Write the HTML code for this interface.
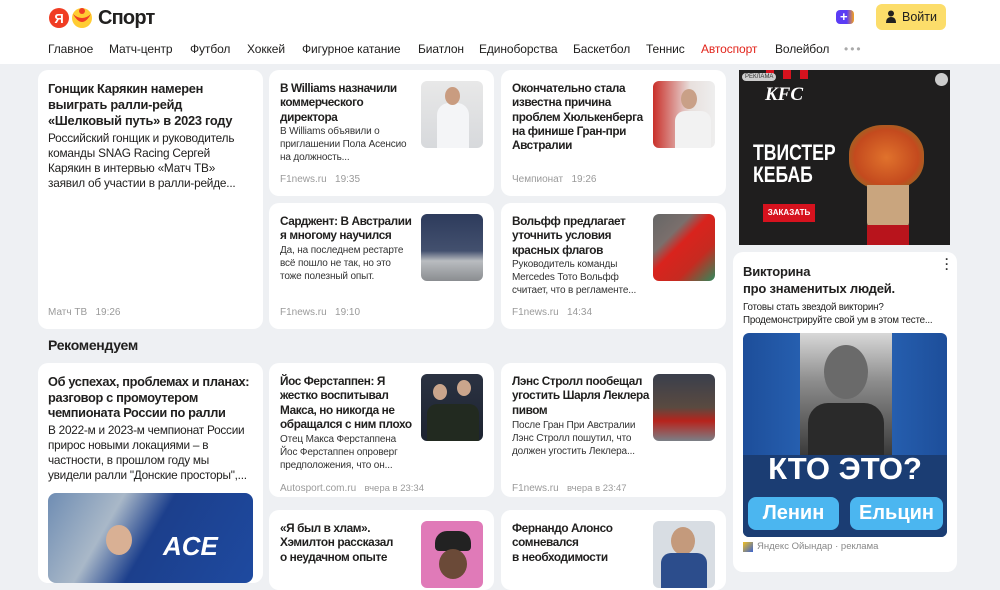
<!DOCTYPE html>
<html><head><meta charset="utf-8"><style>
*{margin:0;padding:0;box-sizing:border-box}
body{width:1000px;height:563px;overflow:hidden;background:#eef0f3;font-family:"Liberation Sans",sans-serif;color:#21201f;position:relative}
.hdr{position:absolute;left:0;top:0;width:1000px;height:64px;background:#fff}
.logo{position:absolute;left:48px;top:6px;display:flex;align-items:center}
.nav{position:absolute;top:42px;left:48px;font-size:12px;white-space:nowrap;letter-spacing:-0.1px}
.nav span{position:absolute;top:0}
.card{position:absolute;background:#fff;border-radius:10px;overflow:hidden}
.t{position:absolute;font-weight:bold;font-size:11.8px;line-height:14.3px;letter-spacing:-0.4px;white-space:nowrap}
.d{position:absolute;font-size:10px;line-height:12.8px;color:#333;letter-spacing:-0.15px;white-space:nowrap}
.m{position:absolute;font-size:10px;color:#9a9a9a;white-space:nowrap}
.th{position:absolute;width:62px;height:67px;border-radius:6px;overflow:hidden}
</style></head><body>
<div class="hdr">
 <div class="logo">
  <svg width="48" height="24" viewBox="0 0 48 24"><circle cx="11" cy="12" r="10" fill="#f03d24"/><text x="11" y="17" font-size="13" font-weight="bold" fill="#fff" text-anchor="middle" font-family="Liberation Sans">Я</text><circle cx="34" cy="12" r="10" fill="#fc3"/><path d="M25 8 Q34 24 43 8 Q34 16 25 8Z" fill="#f03d24"/><circle cx="34" cy="5" r="3" fill="#f03d24"/></svg>
  <span style="font-size:20px;font-weight:bold;margin-left:2px;letter-spacing:-0.8px">Спорт</span>
 </div>
 <div style="position:absolute;left:836px;top:10px;width:18px;height:14px;border-radius:4px;background:linear-gradient(90deg,#5b3cf5 60%,#f7a21b)"></div>
 <div style="position:absolute;left:840px;top:10px;color:#fff;font-weight:bold;font-size:13px;line-height:14px">+</div>
 <div style="position:absolute;left:876px;top:4px;width:70px;height:26px;border-radius:6px;background:#fcdd6a;font-size:12.5px;line-height:26px;padding-left:26px">Войти</div>
 <svg style="position:absolute;left:886px;top:10px" width="10" height="13" viewBox="0 0 10 13"><circle cx="5" cy="3.5" r="3" fill="#21201f"/><path d="M0 13 Q0 7 5 7 Q10 7 10 13Z" fill="#21201f"/></svg>
 <div class="nav">
  <span style="left:0">Главное</span><span style="left:61px">Матч-центр</span><span style="left:142px">Футбол</span><span style="left:199px">Хоккей</span><span style="left:254px">Фигурное катание</span><span style="left:370px">Биатлон</span><span style="left:431px">Единоборства</span><span style="left:525px">Баскетбол</span><span style="left:598px">Теннис</span><span style="left:653px;color:#e2231a">Автоспорт</span><span style="left:727px">Волейбол</span><span style="left:796px;color:#aaa;letter-spacing:2px">•••</span>
 </div>
</div>

<div class="card" style="left:38px;top:70px;width:225px;height:259px">
 <div class="t" style="left:10px;top:11px;font-size:12.8px;line-height:16px;letter-spacing:-0.25px">Гонщик Карякин намерен<br>выиграть ралли-рейд<br>«Шелковый путь» в 2023 году</div>
 <div class="d" style="left:10px;top:61px;font-size:11.8px;line-height:15px;color:#21201f;letter-spacing:-0.2px">Российский гонщик и руководитель<br>команды SNAG Racing Сергей<br>Карякин в интервью «Матч ТВ»<br>заявил об участии в ралли-рейде...</div>
 <div class="m" style="left:10px;top:237px">Матч ТВ &nbsp;&nbsp;19:26</div>
</div>

<div class="card" style="left:269px;top:70px;width:225px;height:126px">
 <div class="t" style="left:11px;top:11px">В Williams назначили<br>коммерческого<br>директора</div>
 <div class="d" style="left:11px;top:56px">В Williams объявили о<br>приглашении Пола Асенсио<br>на должность...</div>
 <div class="th" style="left:152px;top:11px;background:linear-gradient(#e8e8e8,#d7d9dc)"><div style="position:absolute;left:16px;top:22px;width:32px;height:45px;background:#f4f5f7;border-radius:12px 12px 0 0"></div><div style="position:absolute;left:24px;top:6px;width:15px;height:18px;background:#c99c80;border-radius:50%"></div></div>
 <div class="m" style="left:11px;top:104px">F1news.ru &nbsp;&nbsp;19:35</div>
</div>
<div class="card" style="left:501px;top:70px;width:225px;height:126px">
 <div class="t" style="left:11px;top:11px">Окончательно стала<br>известна причина<br>проблем Хюлькенберга<br>на финише Гран-при<br>Австралии</div>
 <div class="th" style="left:152px;top:11px;background:linear-gradient(90deg,#c9302a,#e8e0dd 60%,#eee)"><div style="position:absolute;left:22px;top:30px;width:36px;height:37px;background:#f2f2f2;border-radius:10px 10px 0 0"></div><div style="position:absolute;left:28px;top:8px;width:16px;height:20px;background:#c9a087;border-radius:50%"></div></div>
 <div class="m" style="left:11px;top:104px">Чемпионат &nbsp;&nbsp;19:26</div>
</div>
<div class="card" style="left:269px;top:203px;width:225px;height:126px">
 <div class="t" style="left:11px;top:11px">Сарджент: В Австралии<br>я многому научился</div>
 <div class="d" style="left:11px;top:42px">Да, на последнем рестарте<br>всё пошло не так, но это<br>тоже полезный опыт.</div>
 <div class="th" style="left:152px;top:11px;background:linear-gradient(#2d3b5c 0,#43506e 55%,#b9bcc0 70%,#8a8d90)"></div>
 <div class="m" style="left:11px;top:104px">F1news.ru &nbsp;&nbsp;19:10</div>
</div>
<div class="card" style="left:501px;top:203px;width:225px;height:126px">
 <div class="t" style="left:11px;top:11px">Вольфф предлагает<br>уточнить условия<br>красных флагов</div>
 <div class="d" style="left:11px;top:56px">Руководитель команды<br>Mercedes Тото Вольфф<br>считает, что в регламенте...</div>
 <div class="th" style="left:152px;top:11px;background:linear-gradient(135deg,#666 0,#7a6f6c 30%,#d9231d 45%,#c62a20 70%,#2f8a5c)"></div>
 <div class="m" style="left:11px;top:104px">F1news.ru &nbsp;&nbsp;14:34</div>
</div>

<div style="position:absolute;left:48px;top:337px;font-size:14px;font-weight:bold;letter-spacing:-0.3px">Рекомендуем</div>

<div class="card" style="left:38px;top:363px;width:225px;height:220px">
 <div class="t" style="left:10px;top:11px;font-size:12.8px;line-height:15.5px;letter-spacing:-0.35px">Об успехах, проблемах и планах:<br>разговор с промоутером<br>чемпионата России по ралли</div>
 <div class="d" style="left:10px;top:60px;font-size:11.8px;line-height:15px;color:#21201f;letter-spacing:-0.25px">В 2022-м и 2023-м чемпионат России<br>прирос новыми локациями – в<br>частности, в прошлом году мы<br>увидели ралли "Донские просторы",...</div>
 <div style="position:absolute;left:10px;top:130px;width:205px;height:90px;border-radius:8px;background:linear-gradient(120deg,#6f8db3 0,#a9b8c8 30%,#1c3f8c 50%,#1e4aa0 100%)"><div style="position:absolute;left:58px;top:32px;width:26px;height:30px;background:#d9b094;border-radius:50%"></div><div style="position:absolute;left:115px;top:38px;color:#fff;font-size:26px;font-weight:bold;font-style:italic">ACE</div></div>
</div>
<div class="card" style="left:269px;top:363px;width:225px;height:134px">
 <div class="t" style="left:11px;top:11px">Йос Ферстаппен: Я<br>жестко воспитывал<br>Макса, но никогда не<br>обращался с ним плохо</div>
 <div class="d" style="left:11px;top:71px">Отец Макса Ферстаппена<br>Йос Ферстаппен опроверг<br>предположения, что он...</div>
 <div class="th" style="left:152px;top:11px;background:linear-gradient(#2b3242,#1c2330)"><div style="position:absolute;left:6px;top:30px;width:52px;height:37px;background:#222a20;border-radius:10px 10px 0 0"></div><div style="position:absolute;left:12px;top:10px;width:14px;height:16px;background:#caa58c;border-radius:50%"></div><div style="position:absolute;left:36px;top:6px;width:14px;height:16px;background:#caa58c;border-radius:50%"></div></div>
 <div class="m" style="left:11px;top:120px">Autosport.com.ru &nbsp;&nbsp;<span style="font-size:9.5px">вчера в 23:34</span></div>
</div>
<div class="card" style="left:501px;top:363px;width:225px;height:134px">
 <div class="t" style="left:11px;top:11px">Лэнс Стролл пообещал<br>угостить Шарля Леклера<br>пивом</div>
 <div class="d" style="left:11px;top:57px">После Гран При Австралии<br>Лэнс Стролл пошутил, что<br>должен угостить Леклера...</div>
 <div class="th" style="left:152px;top:11px;background:linear-gradient(#3a3f4c 0,#5a4a40 50%,#b7231c 70%,#7a8087)"></div>
 <div class="m" style="left:11px;top:120px">F1news.ru &nbsp;&nbsp;<span style="font-size:9.5px">вчера в 23:47</span></div>
</div>
<div class="card" style="left:269px;top:510px;width:225px;height:80px">
 <div class="t" style="left:11px;top:11px">«Я был в хлам».<br>Хэмилтон рассказал<br>о неудачном опыте</div>
 <div class="th" style="left:152px;top:11px;background:#e07ab8"><div style="position:absolute;left:14px;top:10px;width:36px;height:20px;background:#222;border-radius:12px 12px 4px 4px"></div><div style="position:absolute;left:18px;top:28px;width:28px;height:30px;background:#6b4a38;border-radius:50%"></div></div>
</div>
<div class="card" style="left:501px;top:510px;width:225px;height:80px">
 <div class="t" style="left:11px;top:11px">Фернандо Алонсо<br>сомневался<br>в необходимости</div>
 <div class="th" style="left:152px;top:11px;background:#d8dde3"><div style="position:absolute;left:18px;top:6px;width:24px;height:28px;background:#c49a7c;border-radius:50%"></div><div style="position:absolute;left:8px;top:32px;width:46px;height:35px;background:#2c4d8c;border-radius:10px 10px 0 0"></div></div>
</div>

<div style="position:absolute;left:739px;top:70px;width:211px;height:175px;background:#1f1e1e;overflow:hidden">
 <div style="position:absolute;left:27px;top:0;width:8px;height:9px;background:#d6121e"></div><div style="position:absolute;left:44px;top:0;width:8px;height:9px;background:#d6121e"></div><div style="position:absolute;left:61px;top:0;width:8px;height:9px;background:#d6121e"></div>
 <div style="position:absolute;left:3px;top:3px;background:#ccc;border-radius:5px;font-size:6px;padding:1px 3px;color:#333">РЕКЛАМА</div>
 <div style="position:absolute;left:26px;top:14px;color:#fff;font-weight:bold;font-style:italic;font-size:19px;font-family:'Liberation Serif',serif">KFC</div>
 <div style="position:absolute;left:14px;top:72px;color:#fff;font-weight:bold;font-size:22px;line-height:22px;transform:scaleX(.8);transform-origin:left">ТВИСТЕР<br>КЕБАБ</div>
 <div style="position:absolute;left:24px;top:134px;width:52px;height:18px;background:#d6121e;color:#fff;font-size:8px;font-weight:bold;text-align:center;line-height:18px">ЗАКАЗАТЬ</div>
 <div style="position:absolute;left:110px;top:55px;width:75px;height:65px;border-radius:45%;background:radial-gradient(#e0722c,#c44a1e 60%,#6b8a2a)"></div>
 <div style="position:absolute;left:128px;top:115px;width:42px;height:45px;background:#c9a57e;border-radius:0 0 8px 8px"></div>
 <div style="position:absolute;left:128px;top:155px;width:42px;height:20px;background:#b8141c"></div>
 <div style="position:absolute;left:196px;top:3px;width:13px;height:13px;border-radius:50%;background:#ccc"></div>
</div>

<div class="card" style="left:733px;top:252px;width:224px;height:320px">
 <div style="position:absolute;right:8px;top:5px;color:#333;font-size:12px;font-weight:bold;line-height:5px">·<br>·<br>·</div>
 <div style="position:absolute;left:10px;top:11px;font-size:13px;font-weight:bold;line-height:17px;letter-spacing:-0.2px">Викторина<br>про знаменитых людей.</div>
 <div style="position:absolute;left:10px;top:49px;font-size:9.8px;line-height:13px;white-space:nowrap;letter-spacing:-0.2px">Готовы стать звездой викторин?<br>Продемонстрируйте свой ум в этом тесте...</div>
 <div style="position:absolute;left:10px;top:81px;width:204px;height:204px;border-radius:6px;background:linear-gradient(90deg,#1d4e9a,#2d6cc0 50%,#1d4e9a);overflow:hidden">
  <div style="position:absolute;left:57px;top:0;width:92px;height:122px;background:linear-gradient(#d8d8d8,#8c8c8c 40%,#3a3a3a)"><div style="position:absolute;left:24px;top:12px;width:44px;height:54px;background:#6a6a6a;border-radius:50%"></div><div style="position:absolute;left:8px;top:70px;width:76px;height:52px;background:#2a2a2a;border-radius:20px 20px 0 0"></div></div>
  <div style="position:absolute;left:0;top:122px;width:204px;height:82px;background:#1b3d73"></div>
  <div style="position:absolute;left:0;top:118px;width:204px;text-align:center;color:#fff;font-weight:bold;font-size:31px">КТО ЭТО?</div>
  <div style="position:absolute;left:5px;top:164px;width:91px;height:33px;border-radius:8px;background:#4bb6f0;color:#fff;font-weight:bold;font-size:20px;text-align:center;line-height:33px">Ленин</div>
  <div style="position:absolute;left:107px;top:164px;width:93px;height:33px;border-radius:8px;background:#4bb6f0;color:#fff;font-weight:bold;font-size:20px;text-align:center;line-height:33px">Ельцин</div>
 </div>
 <div style="position:absolute;left:10px;top:290px;width:10px;height:10px;background:linear-gradient(135deg,#f0c020,#3a62d0)"></div>
 <div style="position:absolute;left:24px;top:289px;font-size:9.5px;color:#888">Яндекс Ойындар · реклама</div>
</div>
</body></html>
